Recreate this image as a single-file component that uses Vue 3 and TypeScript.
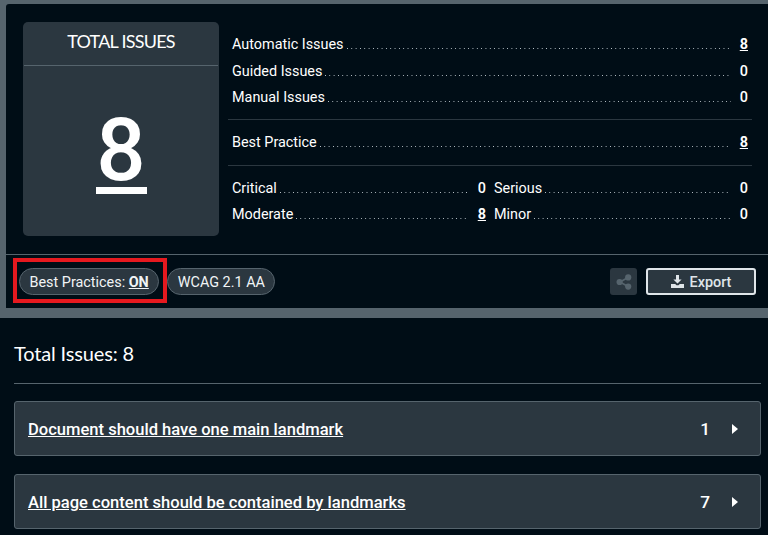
<script setup lang="ts">
interface Row { label: string; value: number; link?: boolean }
const groups: Row[][] = [
  [
    { label: 'Automatic Issues', value: 8, link: true },
    { label: 'Guided Issues', value: 0 },
    { label: 'Manual Issues', value: 0 },
  ],
  [{ label: 'Best Practice', value: 8, link: true }],
]
const severity: Row[] = [
  { label: 'Critical', value: 0 },
  { label: 'Serious', value: 0 },
  { label: 'Moderate', value: 8, link: true },
  { label: 'Minor', value: 0 },
]
const issues = [
  { title: 'Document should have one main landmark', count: 1 },
  { title: 'All page content should be contained by landmarks', count: 7 },
]
</script>

<template>
  <div class="page">
    <section class="summary-wrap">
      <div class="summary">
        <div class="top">
          <div class="total">
            <div class="total-head">TOTAL ISSUES</div>
            <div class="total-body"><a class="big" href="#">8</a></div>
          </div>
          <div class="stats">
            <template v-for="(group, i) in groups" :key="i">
              <div class="group">
                <div v-for="r in group" :key="r.label" class="row">
                  <span class="label">{{ r.label }}</span>
                  <span class="dots"></span>
                  <a v-if="r.link" class="val link" href="#">{{ r.value }}</a>
                  <span v-else class="val">{{ r.value }}</span>
                </div>
              </div>
            </template>
            <div class="group sev">
              <div v-for="r in severity" :key="r.label" class="row">
                <span class="label">{{ r.label }}</span>
                <span class="dots"></span>
                <a v-if="r.link" class="val link" href="#">{{ r.value }}</a>
                <span v-else class="val">{{ r.value }}</span>
              </div>
            </div>
          </div>
        </div>
        <div class="toolbar">
          <div class="chips">
            <button class="chip first">Best Practices: <u>ON</u><span class="mark"></span></button>
            <button class="chip">WCAG 2.1 AA</button>
          </div>
          <div class="actions">
            <button class="share" aria-label="Share">
              <svg width="16" height="16" viewBox="0 0 16 16">
                <path d="M4 8 12 3.5M4 8l8 4.5" stroke="#56646d" stroke-width="1.6" fill="none" />
                <circle cx="3.6" cy="8" r="3.1" fill="#56646d" />
                <circle cx="12.2" cy="3.4" r="3.1" fill="#56646d" />
                <circle cx="12.2" cy="12.6" r="3.1" fill="#56646d" />
              </svg>
            </button>
            <button class="export">
              <svg width="13" height="13" viewBox="0 0 13 13">
                <path d="M5 0h3v4.500h2.600L6.500 8.600 2.400 4.500H5z" fill="#dfe5e9" />
                <path d="M0 9h4.200l1.300 1.300h2L8.800 9H13v4H0z" fill="#dfe5e9" />
              </svg>
              <span class="export-text">Export</span>
            </button>
          </div>
        </div>
      </div>
    </section>

    <main class="results">
      <h2 class="results-title">Total Issues: 8</h2>
      <div class="issue-list">
        <div v-for="it in issues" :key="it.title" class="issue">
          <a class="issue-title" href="#">{{ it.title }}</a>
          <span class="issue-count">{{ it.count }}</span>
          <span class="caret"></span>
        </div>
      </div>
    </main>
  </div>
</template>

<style>
html, body { margin: 0; background: #000d16; overflow: hidden; }
</style>

<style scoped>
.page {
  width: 768px;
  height: 535px;
  overflow: hidden;
  background: #000d16;
  color: #fff;
  font-family: Roboto, "Liberation Sans", sans-serif;
  font-size: 14.400px;
}
.summary-wrap {
  background: #56646d;
  padding: 4px 0 10px 6px;
}
.summary {
  background: #000d16;
  height: 304px;
  border-radius: 3px 0 0 0;
  display: flex;
  flex-direction: column;
}
.top {
  height: 251px;
  box-sizing: border-box;
  padding: 18px 16px 0 17px;
  display: flex;
  gap: 9px;
  border-bottom: 1px solid #56646d;
}
.total {
  width: 196px;
  height: 214px;
  background: #2b3740;
  border-radius: 5px;
  display: flex;
  flex-direction: column;
}
.total-head {
  height: 43px;
  margin: 0 1px;
  border-bottom: 1px solid #56646d;
  font-family: Lato, sans-serif;
  font-size: 18px;
  letter-spacing: -0.75px;
  line-height: 39px;
  text-align: center;
}
.total-body {
  flex: 1;
  display: flex;
  justify-content: center;
  align-items: center;
}
.big {
  display: block;
  width: 51px;
  color: #fff;
  font-size: 87px;
  line-height: 74px;
  font-weight: 500;
  text-align: center;
  text-decoration: none;
  border-bottom: 7px solid #fff;
  margin-top: 5px;
}
.stats {
  flex: 1;
  display: flex;
  flex-direction: column;
}
.group {
  padding: 9px 4px 10px;
  border-bottom: 1px solid #2b3740;
  display: flex;
  flex-direction: column;
}
.group:first-child { padding-bottom: 8px; }
.group.sev {
  border-bottom: 0;
  display: grid;
  grid-template-columns: 1fr 1fr;
  column-gap: 8px;
  padding-top: 9px;
  padding-bottom: 0;
}
.row {
  height: 26.500px;
  box-sizing: border-box;
  padding-top: 2px;
  display: flex;
  align-items: center;
  line-height: 20px;
}
.sev .row { height: 26px; }
.label { white-space: nowrap; }
.dots {
  flex: 1;
  height: 1px;
  margin: 7px 9px 0 3px;
  background-image: linear-gradient(to right, #c3ccd2 1px, transparent 1px);
  background-size: 4.330px 1px;
  background-repeat: repeat-x;
}
.val {
  min-width: 8px;
  font-weight: 500;
  text-align: right;
  color: #fff;
}
.link { font-weight: 700; text-decoration: underline; }
.toolbar {
  flex: 1;
  display: flex;
  align-items: center;
  justify-content: space-between;
  padding: 0 12px 0 13px;
}
.chips, .actions { display: flex; align-items: center; }
.chips { gap: 8px; }
.actions { gap: 9px; }
button { font-family: inherit; margin: 0; cursor: pointer; }
.chip {
  position: relative;
  height: 27px;
  padding: 2px 9.500px 0;
  border: 1px solid #56646d;
  border-radius: 14px;
  background: #2b3740;
  color: #f1f4f6;
  font-size: 14.400px;
  white-space: nowrap;
}
.chip u { font-weight: 700; }
.mark {
  position: absolute;
  left: -7px;
  right: -9px;
  top: -11px;
  bottom: -9px;
  border: 4px solid #e5191f;
  pointer-events: none;
}
.share {
  width: 27px;
  height: 27px;
  padding: 0;
  border: 0;
  border-radius: 3px;
  background: #2b3740;
  display: flex;
  align-items: center;
  justify-content: center;
}
.export {
  width: 110px;
  height: 27px;
  border: 2px solid #dfe5e9;
  border-radius: 3px;
  background: #2b3740;
  color: #dfe5e9;
  font-size: 14.400px;
  font-weight: 500;
  display: flex;
  align-items: center;
  justify-content: center;
  gap: 6px;
  padding: 0;
}
.export-text { padding-top: 2px; }
.results { padding: 0 7px 0 14px; }
.results-title {
  margin: 0;
  height: 65px;
  border-bottom: 1px solid #56646d;
  font-family: Lato, sans-serif;
  font-size: 20px;
  font-weight: 400;
  letter-spacing: -0.15px;
  line-height: 71px;
}
.issue-list {
  margin-top: 17px;
  display: flex;
  flex-direction: column;
  gap: 18px;
}
.issue {
  height: 55px;
  box-sizing: border-box;
  border: 1px solid #56646d;
  border-radius: 3px;
  background: #2b3740;
  padding: 0 22px 0 13px;
  display: flex;
  align-items: center;
}
.issue-title {
  flex: 1;
  padding-top: 2px;
  color: #fff;
  font-size: 16.560px;
  font-weight: 500;
  text-decoration: underline;
}
.issue-count {
  font-size: 17.280px;
  font-weight: 500;
  margin-right: 22px;
}
.caret {
  width: 0;
  height: 0;
  border-left: 6px solid #fff;
  border-top: 5px solid transparent;
  border-bottom: 5px solid transparent;
}
</style>
